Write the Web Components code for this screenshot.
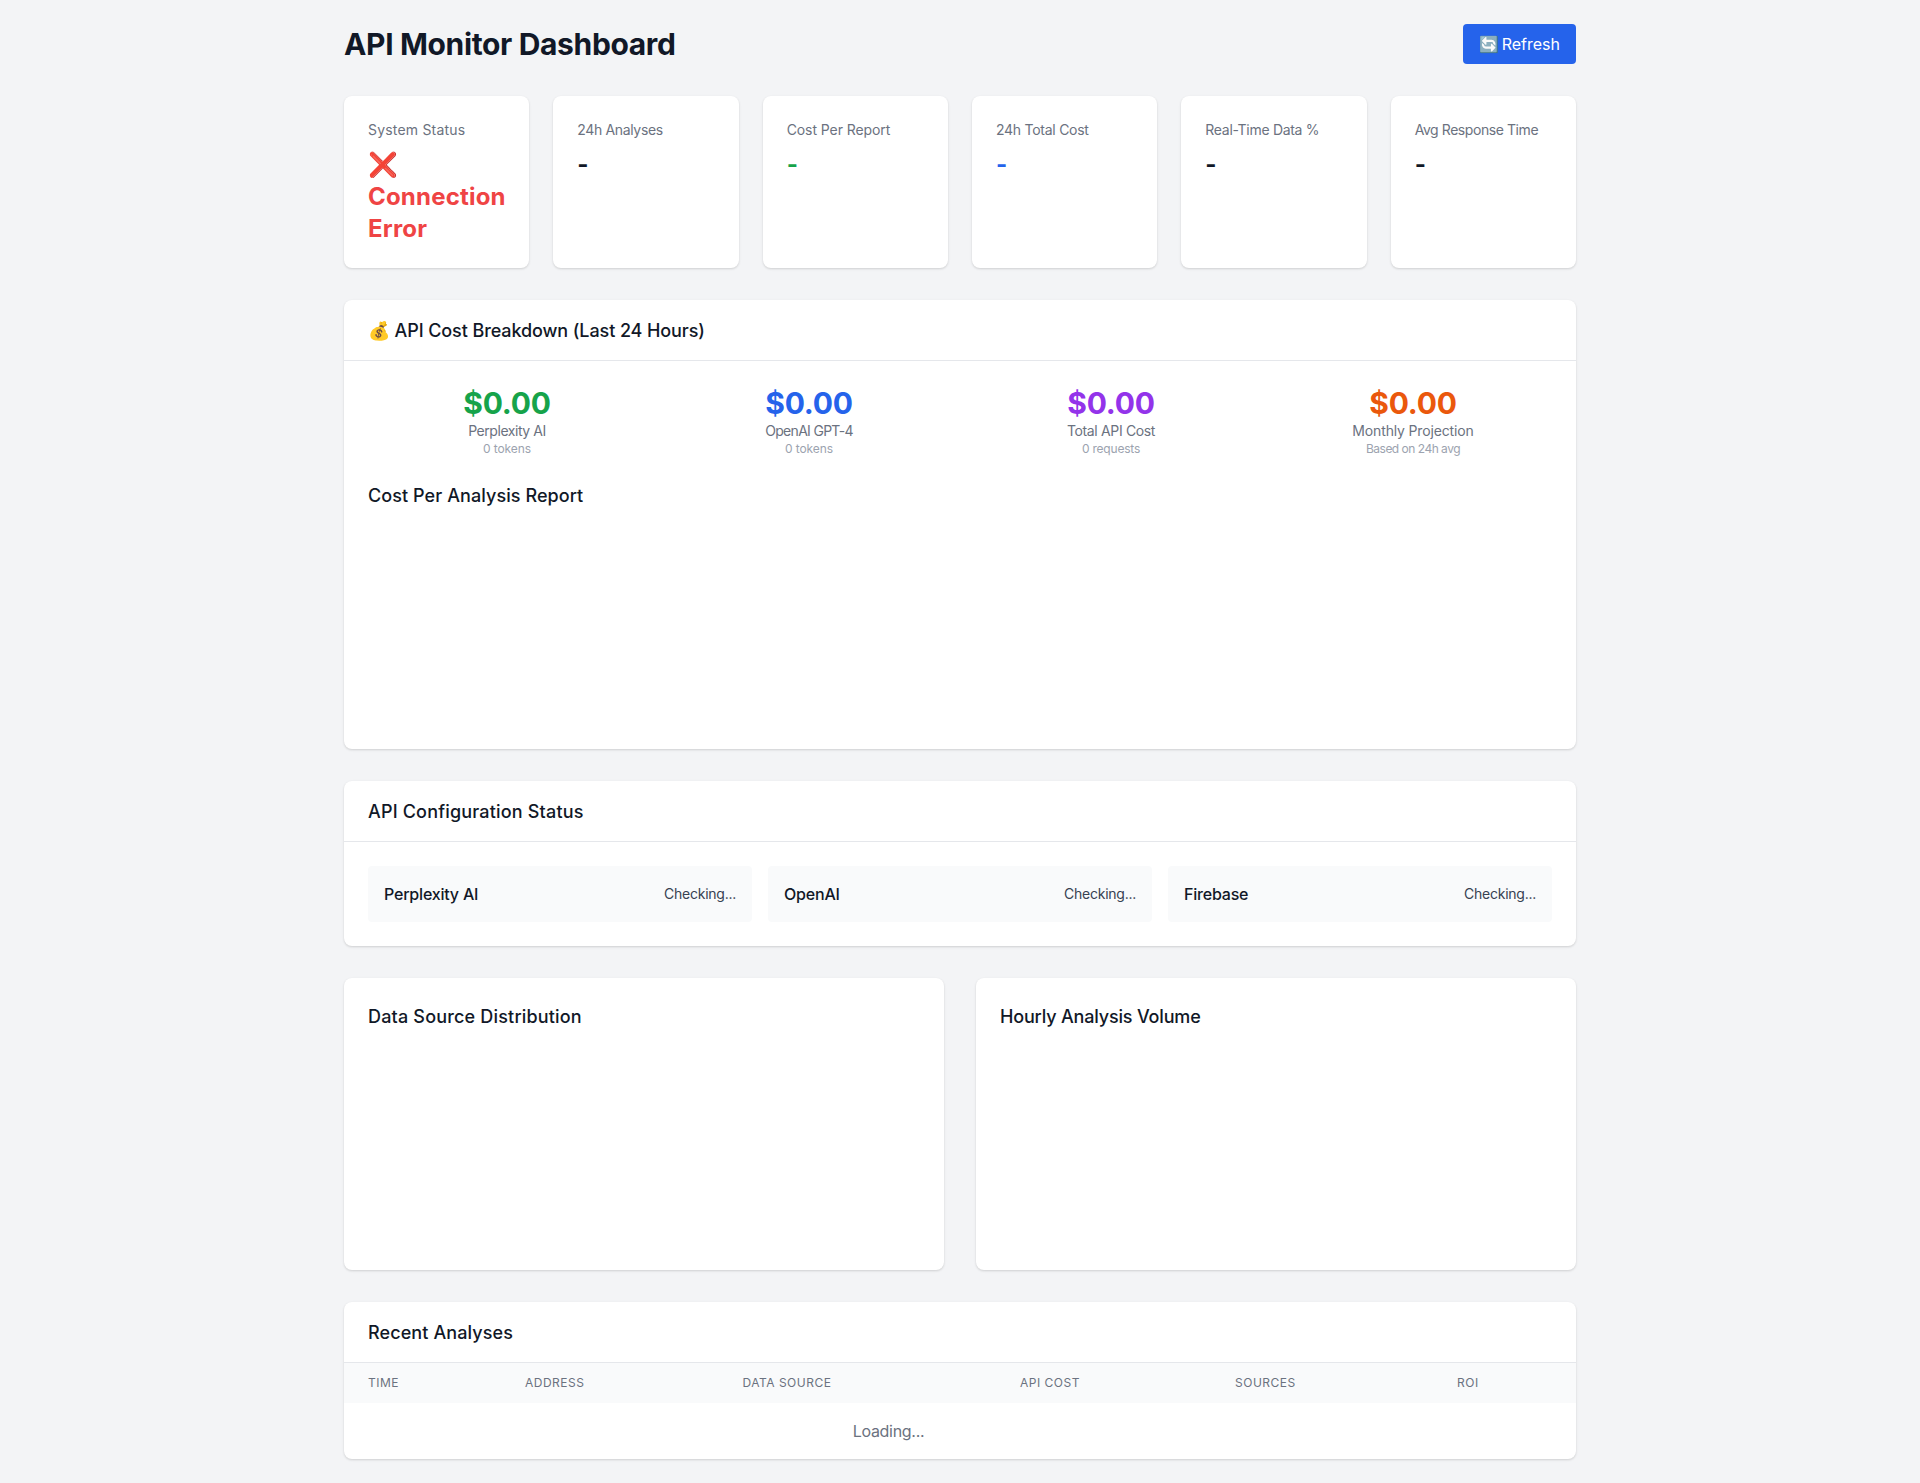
<!DOCTYPE html>
<html lang="en">
<head>
<meta charset="utf-8">
<title>API Monitor Dashboard</title>
<style>
  body { margin: 0; background: #f3f4f6; color: #111827; font-family: Inter, "Noto Sans", sans-serif; }
</style>
</head>
<body>
<api-dashboard>
  <dash-header slot="header" title="API Monitor Dashboard"></dash-header>

  <div slot="stats" style="display:contents">
    <stat-card label="System Status" tone="#ef4444" style="--label-track:.19px;--value-track:.2px">❌ Connection Error</stat-card>
    <stat-card label="24h Analyses" style="--label-track:-.35px">-</stat-card>
    <stat-card label="Cost Per Report" tone="#16a34a" style="--label-track:-.08px">-</stat-card>
    <stat-card label="24h Total Cost" tone="#2563eb" style="--label-track:-.26px">-</stat-card>
    <stat-card label="Real-Time Data %" style="--label-track:-.3px">-</stat-card>
    <stat-card label="Avg Response Time" style="--label-track:-.43px">-</stat-card>
  </div>

  <cost-panel slot="cost"></cost-panel>
  <config-panel slot="config"></config-panel>

  <chart-card slot="charts" title="Data Source Distribution" style="--title-track:.18px"></chart-card>
  <chart-card slot="charts" title="Hourly Analysis Volume" style="--title-track:-.17px"></chart-card>

  <recent-table slot="recent"></recent-table>
</api-dashboard>

<script>
class ApiDashboard extends HTMLElement {
  constructor() {
    super();
    this.attachShadow({ mode: 'open' });
    this.shadowRoot.innerHTML = `
    <style>
    :host { display: block; max-width: 1232px; margin: 0 auto; padding: 24px; }
    .stats { display: grid; grid-template-columns: repeat(6, minmax(0, 1fr)); gap: 24px; margin-bottom: 32px; }
    .charts { display: grid; grid-template-columns: 1fr 1fr; gap: 32px; margin-bottom: 32px; }
    .stack { margin-bottom: 32px; }
    </style>
    <slot name="header"></slot>
    <div class="stats"><slot name="stats"></slot></div>
    <div class="stack"><slot name="cost"></slot></div>
    <div class="stack"><slot name="config"></slot></div>
    <div class="charts"><slot name="charts"></slot></div>
    <slot name="recent"></slot>
    `;
  }
}

class DashHeader extends HTMLElement {
  constructor() {
    super();
    this.attachShadow({ mode: 'open' });
  }
  connectedCallback() {
    this.shadowRoot.innerHTML = `
    <style>
    :host { display: flex; justify-content: space-between; align-items: center; margin-bottom: 32px; }
    h1 { margin: 0; font-size: 30px; line-height: 36px; font-weight: 700; letter-spacing: -.35px; color: #111827; }
    button {
      height: 40px; padding: 8px 16px; border: 0; border-radius: 4px;
      background: #2563eb; color: #fff; font: 400 16px/24px Inter, sans-serif; word-spacing: -2px;
    }
    </style>
    <h1>${this.getAttribute('title')}</h1>
    <button>🔄 Refresh</button>
    `;
  }
}

class StatCard extends HTMLElement {
  constructor() {
    super();
    this.attachShadow({ mode: 'open' });
  }
  connectedCallback() {
    const tone = this.getAttribute('tone') || '#111827';
    this.shadowRoot.innerHTML = `
    <style>
    :host {
      display: block; padding: 24px 24px 23px; background: #fff; border-radius: 8px;
      box-shadow: 0 1px 3px rgba(0,0,0,.1), 0 1px 2px rgba(0,0,0,.06);
    }
    .label { font-size: 14px; line-height: 20px; color: #6b7280; letter-spacing: var(--label-track, 0); }
    .value { margin-top: 9px; font-size: 24px; line-height: 32px; font-weight: 700; letter-spacing: var(--value-track, 0); }
    </style>
    <div class="label">${this.getAttribute('label')}</div>
    <div class="value" style="color:${tone}"><slot></slot></div>
    `;
  }
}

class PanelCard extends HTMLElement {
  constructor() {
    super();
    this.attachShadow({ mode: 'open' });
  }
  connectedCallback() {
    this.shadowRoot.innerHTML = `
    <style>
    :host {
      display: block; background: #fff; border-radius: 8px; overflow: hidden;
      box-shadow: 0 1px 3px rgba(0,0,0,.1), 0 1px 2px rgba(0,0,0,.06);
    }
    header {
      padding: 17px 24px 15px; border-bottom: 1px solid #e5e7eb;
      font-size: 18px; line-height: 28px; font-weight: 550; color: #111827;
      letter-spacing: var(--title-track, .1px);
    }
    .body { padding: var(--panel-padding, 24px); }
    </style>
    <header>${this.getAttribute('title')}</header>
    <div class="body"><slot></slot></div>
    `;
  }
}

class CostItem extends HTMLElement {
  constructor() {
    super();
    this.attachShadow({ mode: 'open' });
  }
  connectedCallback() {
    this.shadowRoot.innerHTML = `
    <style>
    :host { display: block; text-align: center; }
    .amount { font-size: 30px; line-height: 36px; font-weight: 700; letter-spacing: -.2px; color: ${this.getAttribute('tone')}; }
    .name { font-size: 14px; line-height: 20px; color: #6b7280; letter-spacing: var(--name-track, 0); }
    .note { font-size: 12px; line-height: 16px; color: #9ca3af; letter-spacing: var(--note-track, 0); }
    </style>
    <div class="amount">${this.getAttribute('amount')}</div>
    <div class="name">${this.getAttribute('name')}</div>
    <div class="note">${this.getAttribute('note')}</div>
    `;
  }
}

class CostPanel extends HTMLElement {
  constructor() {
    super();
    this.attachShadow({ mode: 'open' });
    this.shadowRoot.innerHTML = `
    <style>
    :host { display: block; --title-track: -.1px; }
    .grid { display: grid; grid-template-columns: repeat(4, 1fr); gap: 24px; margin-bottom: 25px; }
    h3 { margin: 0 0 15px; font-size: 18px; line-height: 28px; font-weight: 550; letter-spacing: .08px; color: #111827; }
    .chart { height: 200px; }
    </style>
    <panel-card title="💰 API Cost Breakdown (Last 24 Hours)">
      <div class="grid">
        <cost-item amount="$0.00" tone="#16a34a" name="Perplexity AI" note="0 tokens" style="--name-track:-.45px;--note-track:-.1px"></cost-item>
        <cost-item amount="$0.00" tone="#2563eb" name="OpenAI GPT-4" note="0 tokens" style="--name-track:-.7px;--note-track:-.1px"></cost-item>
        <cost-item amount="$0.00" tone="#9333ea" name="Total API Cost" note="0 requests" style="--name-track:-.35px;--note-track:-.2px"></cost-item>
        <cost-item amount="$0.00" tone="#ea580c" name="Monthly Projection" note="Based on 24h avg" style="--name-track:-.15px;--note-track:-.5px"></cost-item>
      </div>
      <h3>Cost Per Analysis Report</h3>
      <div class="chart"></div>
    </panel-card>
    `;
  }
}

class ApiStatus extends HTMLElement {
  constructor() {
    super();
    this.attachShadow({ mode: 'open' });
  }
  connectedCallback() {
    this.shadowRoot.innerHTML = `
    <style>
    :host {
      display: flex; justify-content: space-between; align-items: center;
      padding: 16px; background: #f9fafb; border-radius: 4px;
    }
    .name { font-size: 16px; line-height: 24px; font-weight: 500; letter-spacing: -.2px; color: #111827; }
    .state { font-size: 14px; line-height: 20px; letter-spacing: -.25px; color: #374151; }
    </style>
    <span class="name">${this.getAttribute('name')}</span>
    <span class="state">Checking...</span>
    `;
  }
}

class ConfigPanel extends HTMLElement {
  constructor() {
    super();
    this.attachShadow({ mode: 'open' });
    this.shadowRoot.innerHTML = `
    <style>
    :host { display: block; --title-track: .18px; }
    .grid { display: grid; grid-template-columns: repeat(3, 1fr); gap: 16px; }
    </style>
    <panel-card title="API Configuration Status">
      <div class="grid">
        <api-status name="Perplexity AI"></api-status>
        <api-status name="OpenAI"></api-status>
        <api-status name="Firebase"></api-status>
      </div>
    </panel-card>
    `;
  }
}

class ChartCard extends HTMLElement {
  constructor() {
    super();
    this.attachShadow({ mode: 'open' });
  }
  connectedCallback() {
    this.shadowRoot.innerHTML = `
    <style>
    :host {
      display: block; padding: 25px 24px 24px; background: #fff; border-radius: 8px;
      box-shadow: 0 1px 3px rgba(0,0,0,.1), 0 1px 2px rgba(0,0,0,.06);
    }
    h3 { margin: 0 0 15px; font-size: 18px; line-height: 28px; font-weight: 550; color: #111827; letter-spacing: var(--title-track, 0); }
    .chart { height: 200px; }
    </style>
    <h3>${this.getAttribute('title')}</h3>
    <div class="chart"></div>
    `;
  }
}

class RecentTable extends HTMLElement {
  constructor() {
    super();
    this.attachShadow({ mode: 'open' });
    const cols = [
      ['Time', 157], ['Address', 217.5], ['Data Source', 277.5],
      ['API Cost', 215], ['Sources', 222], ['ROI', 143]
    ];
    this.shadowRoot.innerHTML = `
    <style>
    :host { display: block; --panel-padding: 0; }
    table { width: 100%; border-collapse: collapse; table-layout: fixed; }
    th {
      padding: 12px 24px; background: #f9fafb; text-align: left;
      font-size: 12px; line-height: 16px; font-weight: 400; letter-spacing: .5px;
      text-transform: uppercase; color: #6b7280;
    }
    td { padding: 16px 24px; text-align: center; font-size: 16px; line-height: 24px; letter-spacing: -.3px; color: #6b7280; }
    </style>
    <panel-card title="Recent Analyses">
      <table>
        <colgroup>${cols.map(c => `<col style="width:${c[1]}px">`).join('')}</colgroup>
        <thead><tr>${cols.map(c => `<th>${c[0]}</th>`).join('')}</tr></thead>
        <tbody><tr><td colspan="5">Loading...</td></tr></tbody>
      </table>
    </panel-card>
    `;
  }
}

customElements.define('panel-card', PanelCard);
customElements.define('cost-item', CostItem);
customElements.define('cost-panel', CostPanel);
customElements.define('api-status', ApiStatus);
customElements.define('config-panel', ConfigPanel);
customElements.define('chart-card', ChartCard);
customElements.define('recent-table', RecentTable);
customElements.define('stat-card', StatCard);
customElements.define('dash-header', DashHeader);
customElements.define('api-dashboard', ApiDashboard);
</script>
</body>
</html>
